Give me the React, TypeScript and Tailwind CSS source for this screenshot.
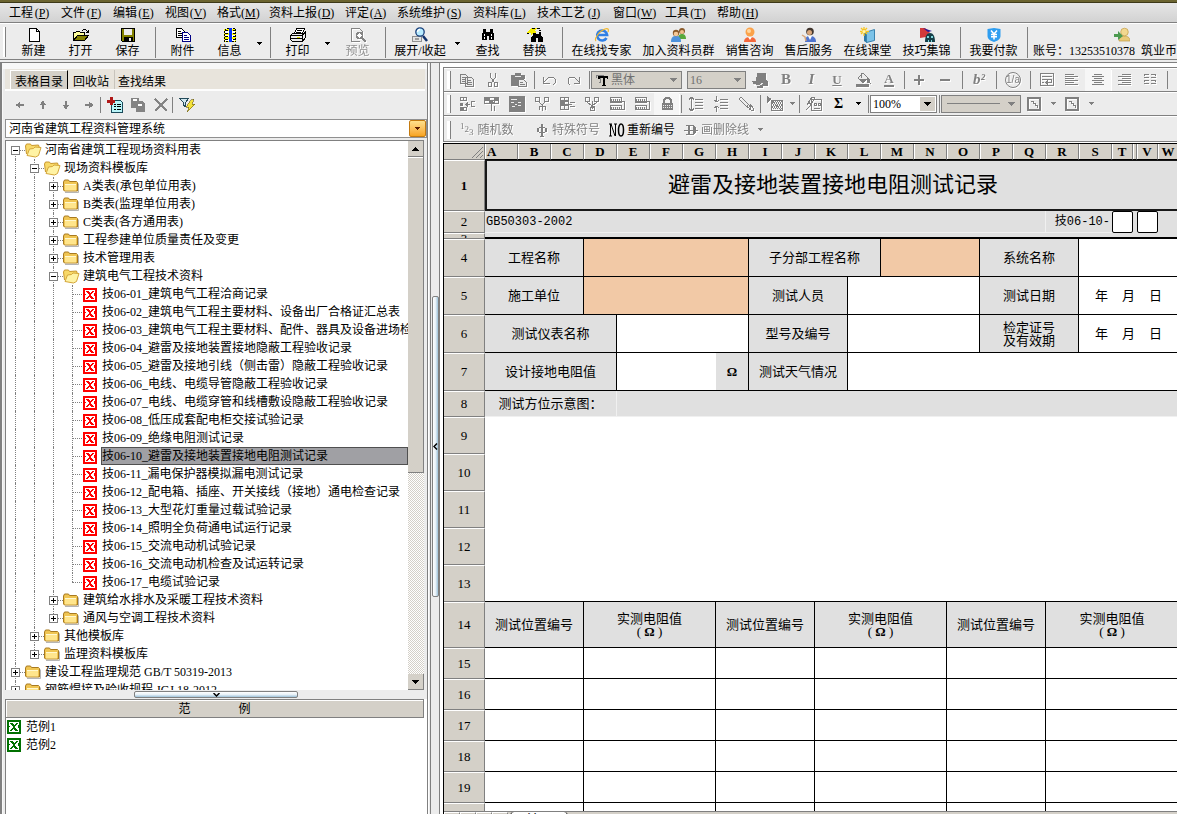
import React from "react";
import type { ReactNode } from "react";

type Kids = { children?: ReactNode };

/* ---------- icon helpers ---------- */

function Ico({ children, size = 16 }: Kids & { size?: number }) {
  return (
    <svg width={size} height={size} viewBox="0 0 16 16" fill="none" stroke="currentColor" shapeRendering="crispEdges" aria-hidden="true" className="shrink-0">
      {children}
    </svg>
  );
}

function Smooth({ children }: Kids) {
  return (
    <svg width="16" height="16" viewBox="0 0 16 16" fill="none" aria-hidden="true" className="shrink-0">
      {children}
    </svg>
  );
}

function Down() {
  return (
    <svg width="7" height="4" viewBox="0 0 7 4" fill="currentColor" shapeRendering="crispEdges" aria-hidden="true">
      <path d="M0 0h7v1H6v1H5v1H4v1H3V3H2V2H1V1H0z" />
    </svg>
  );
}

function SmallDown() {
  return (
    <svg width="5" height="3" viewBox="0 0 5 3" fill="currentColor" shapeRendering="crispEdges" aria-hidden="true">
      <path d="M0 0h5v1H4v1H3v1H2V2H1V1H0z" />
    </svg>
  );
}

const icons: Record<string, ReactNode> = {
  new: (
    <Ico>
      <path d="M3.500 1.500h7l3 3v10h-10z" fill="#fff" stroke="#000" />
      <path d="M10.500 1.500v3h3" stroke="#000" />
    </Ico>
  ),
  open: (
    <Ico>
      <path d="M0.500 13.500v-8h2l1-1h3l1 1h4v3" fill="#ffff9c" stroke="#000" />
      <path d="M0.500 13.500l4-5h11l-4 5z" fill="#848200" stroke="#000" />
      <path d="M9 3.500h1m0-1h3m0 1h1m0 1h2m-3 1h3m-1-3v3" stroke="#000" />
    </Ico>
  ),
  save: (
    <Ico>
      <path d="M1.500 1.500h13v13h-12l-1-1z" fill="#848200" stroke="#000" />
      <rect x="4" y="2" width="8" height="6" fill="#ececec" stroke="none" />
      <rect x="4" y="10" width="9" height="5" fill="#000" stroke="none" />
      <rect x="9" y="11" width="2" height="3" fill="#ececec" stroke="none" />
    </Ico>
  ),
  attach: (
    <Ico>
      <path d="M1.500 1.500h5l3 3v6h-8z" fill="#fff" stroke="#000" />
      <path d="M3 4.500h3m-3 2h4m-4 2h4" stroke="#000" />
      <path d="M7.500 5.500h5l3 3v6h-8z" fill="#fff" stroke="#000084" />
      <path d="M9 8.500h3m-3 2h5m-5 2h5" stroke="#000084" />
    </Ico>
  ),
  info: (
    <Ico>
      <rect x="2" y="2" width="12" height="13" fill="#ffff00" stroke="none" />
      <path d="M3 4.500h10m-10 4h10m-10 4h10" stroke="#fff" strokeWidth="2" />
      <path d="M3 3.500h10m-10 3h10m-10 3h10m-10 3h10" stroke="#000" strokeDasharray="3 1" />
      <path d="M2.500 14.500v-12h1v-1h9v1h1v12z" stroke="#000" strokeDasharray="2 1" />
      <rect x="7" y="1" width="3" height="14" fill="#0030ff" stroke="none" />
    </Ico>
  ),
  print: (
    <Ico>
      <path d="M4.500 6.500l2-5h8l-2 5z" fill="#fff" stroke="#000" />
      <path d="M7 3.500h5m-6 2h5" stroke="#000" />
      <path d="M0.500 8.500l2-2h11l2-2v6l-3 4h-10l-2-2z" fill="#ececec" stroke="#000" />
      <path d="M1 8.500h11v5m0-5l3-3m-14 6h11" stroke="#000" />
      <rect x="7" y="10" width="3" height="1" fill="#dede00" stroke="none" />
    </Ico>
  ),
  preview: (
    <Ico>
      <path d="M1.500 14.500v-13h8l3 3v1m-11 9h8" stroke="#848484" />
      <circle cx="9.500" cy="8.500" r="3" fill="#fff" stroke="#848484" strokeWidth="1.500" />
      <path d="M12 11l4 4" stroke="#848484" strokeWidth="2" />
    </Ico>
  ),
  expand: (
    <Smooth>
      <rect x="0.500" y="9.500" width="9" height="5" fill="#e4e4e4" stroke="#909090" />
      <path d="M3 12h4" stroke="#555" />
      <path d="M11 9l4 5" stroke="#10316b" strokeWidth="2.500" />
      <circle cx="8" cy="5" r="4.200" fill="#b9ecff" stroke="#19407c" strokeWidth="1.300" />
      <path d="M5.500 5c0-1.500 1-2.500 2.500-2.500" stroke="#fff" strokeWidth="1.300" />
    </Smooth>
  ),
  find: (
    <Ico>
      <path d="M3 2h3v3h4V2h3v3l1 2v6h-5V9H7v4H2V7l1-2z" fill="#000" stroke="none" />
      <path d="M4.500 7v2m7-2v2m-7 1v2m7-2v2" stroke="#fff" />
    </Ico>
  ),
  replace: (
    <Ico>
      <path d="M6 5h3v2h3V5h2v3l2 3v4h-5v-4H9v4H4v-4l2-3z" fill="#000" stroke="none" />
      <path d="M0 6l4-5h6L7 4l4 1-5 1-2 3V6z" fill="#f6ee00" stroke="none" />
      <path d="M5 1.500h3m2 0h3M0 6.500h2M12 3.500h2" stroke="#000" />
    </Ico>
  ),
  ie: (
    <Smooth>
      <path d="M12.500 11a5 5 0 1 1 .6-3H4.500" stroke="#2f7fe6" strokeWidth="2.600" />
      <path d="M2 14C0 12 5 4 11 2c3-1 4 0 3 3" stroke="#f2b72d" strokeWidth="1.200" />
    </Smooth>
  ),
  group: (
    <Smooth>
      <path d="M7 12c0-4 2-5 4-5s4 1 4 5z" fill="#58a83c" />
      <circle cx="11" cy="4" r="3" fill="#8a5a2a" />
      <circle cx="11" cy="5" r="2" fill="#f1c08f" />
      <path d="M0 15c0-5 2-6 5-6s5 1 5 6z" fill="#4d92dc" />
      <circle cx="5" cy="6" r="3.200" fill="#8a5a2a" />
      <circle cx="5" cy="7" r="2.300" fill="#f5c998" />
    </Smooth>
  ),
  sales: (
    <Smooth>
      <path d="M2 15c0-4 3-5 6-5s6 1 6 5z" fill="#f4683c" />
      <path d="M6 10l2 3 2-3z" fill="#fff" />
      <circle cx="8" cy="5" r="4.500" fill="#fba24a" />
      <circle cx="7" cy="4" r="2" fill="#ffd79e" />
    </Smooth>
  ),
  service: (
    <Smooth>
      <path d="M4 15c0-5 2-6 5-6s6 1 6 6z" fill="#4f74ce" />
      <path d="M7 9l2 4 2-4z" fill="#fff" />
      <circle cx="9" cy="4.500" r="3.800" fill="#41362e" />
      <circle cx="8.500" cy="5.500" r="2.500" fill="#d9a77c" />
      <path d="M1 8l3 2 1 4" stroke="#d9a77c" strokeWidth="1.500" />
    </Smooth>
  ),
  course: (
    <Smooth>
      <path d="M4 4l3 1v11l-3-2z" fill="#2b78a8" />
      <path d="M6.500 5l8-2.500v11l-8 2z" fill="#7cc3e8" stroke="#3a83ae" />
      <path d="M4 0v9M0 4.500h9M1 1l6 6M7 1L1 7" stroke="#f8c520" strokeWidth="1.300" />
      <circle cx="4" cy="4.500" r="1.500" fill="#fff7b0" />
    </Smooth>
  ),
  skills: (
    <Smooth>
      <path d="M1 1h5l5 4-4 5-6 1z" fill="#d33a3a" />
      <path d="M4 1l9 3-4 1z" fill="#2b1a9a" />
      <path d="M6 15c0-6 2-9 5-9s5 3 5 9z" fill="#153f48" />
      <path d="M8 9h2v2H8zm4 0h2v2h-2zm-3 4h1v2H9zm3 0h1v2h-1z" fill="#7fd6dc" />
    </Smooth>
  ),
  pay: (
    <Smooth>
      <path d="M1.500 2L8 1l6.500 1v7c0 3-3 5-6.500 6-3.500-1-6.500-3-6.500-6z" fill="#2f9ef0" />
      <path d="M5 3.500L8 7l3-3.500M8 7v5.500M5 7.500h6M5 9.700h6" stroke="#fff" strokeWidth="1.500" />
    </Smooth>
  ),
  account: (
    <Smooth>
      <path d="M5 14c0-4 2-5 5-5s6 1 6 5z" fill="#e8ca78" stroke="#c39c44" strokeWidth="0.700" />
      <circle cx="10.500" cy="5" r="3.800" fill="#f2d890" stroke="#c39c44" strokeWidth="0.700" />
      <path d="M0 7h4V4l5 5-5 4v-3H0z" fill="#4c9a50" />
    </Smooth>
  ),
  copy: (
    <Ico>
      <path d="M1.500 2.500h5l2 2v7h-7zM6.500 5.500h6l2 2v7h-8z" fill="#ececec" />
      <path d="M3 5.500h3m-3 2h3m-3 2h3m2-1h4m-4 2h5m-5 2h5" />
    </Ico>
  ),
  cut: (
    <Ico>
      <path d="M5.500 1v4l4 6M10.500 1v4l-4 6" />
      <rect x="3.500" y="10.500" width="3" height="4" />
      <rect x="9.500" y="10.500" width="3" height="4" />
    </Ico>
  ),
  paste: (
    <Ico>
      <path d="M0 3h4V1h6v2h4v4H7v7H0z" fill="currentColor" stroke="none" />
      <path d="M4 4.500h6" stroke="#ececec" />
      <path d="M7.500 7.500h5l3 3v4h-8z" fill="#ececec" />
      <path d="M9 10.500h3m-3 2h5" />
    </Ico>
  ),
  undo: (
    <Ico>
      <path d="M2.500 5v6h6M3 10l3-3 2-2h4l2 2v4l-2 2" />
    </Ico>
  ),
  redo: (
    <Ico>
      <path d="M13.500 5v6h-6M13 10l-3-3-2-2H4L2 7v4l2 2" />
    </Ico>
  ),
  brush: (
    <Ico>
      <path d="M5 1h9v6l2 3v4h-5v2H5v-3H2l-2-4h4z" fill="currentColor" stroke="none" />
      <path d="M1 12l6 2 4-3" stroke="#ececec" />
    </Ico>
  ),
  fill: (
    <Ico>
      <path d="M3 6l5-5 5 5-5 5z" fill="#ececec" />
      <path d="M6.500 6V1M4 7h8l-4 4zM12 6c3 1 3 3 3 5l-3-1z" fill="currentColor" />
      <rect x="1" y="12" width="13" height="3" fill="currentColor" stroke="none" />
    </Ico>
  ),
  plus: (
    <Ico>
      <path d="M3 8h10M8 3v10" strokeWidth="2" />
    </Ico>
  ),
  minus: (
    <Ico>
      <path d="M3 8h10" strokeWidth="2" />
    </Ico>
  ),
  wrap: (
    <Ico>
      <path d="M1.500 1.500h13v12h-13zM3 4.500h10M3 7.500h9v3H7m2-2l-2 2 2 2M3 10.500h2" />
    </Ico>
  ),
  left: (
    <Ico>
      <path d="M1 2.500h9m-9 2h13m-13 2h9m-9 2h13m-13 2h9m-9 2h13" />
    </Ico>
  ),
  center: (
    <Ico>
      <path d="M4 2.500h8m-10 2h12m-10 2h8m-10 2h12m-10 2h8m-10 2h12" />
    </Ico>
  ),
  right: (
    <Ico>
      <path d="M6 2.500h9m-13 2h13m-9 2h9m-13 2h13m-9 2h9m-13 2h13" />
    </Ico>
  ),
  justify: (
    <Ico>
      <path d="M2 2.500h5m2 0h5m-12 3h5m2 0h5m-12 3h5m2 0h5m-12 3h5m2 0h5" />
      <path d="M2.500 2v2m11-2v2m-11 4v2m11-2v2" />
    </Ico>
  ),
  insRow: (
    <Ico>
      <path d="M1.500 1.500h6v3h-6zM1.500 11.500h6v3h-6zM4.500 1.500v3m0 7v3M6 8.500h5M9 6.500l-2 2 2 2M16 5.500h-4v5h4" />
      <path d="M1 7h3v3H1zM2 12h2v2H2z" fill="currentColor" stroke="none" />
    </Ico>
  ),
  insCol: (
    <Ico>
      <path d="M0.500 1.500h14v6h-14zM5.500 2v6M10.500 2v6M1 4.500h13M7.500 5v10m-3-7l3-3 3 3M10.500 10v5" />
      <path d="M1 2h4v2H1zM11 2h3v2h-3z" fill="currentColor" stroke="none" />
    </Ico>
  ),
  dark: (
    <Ico>
      <rect x="0" y="0" width="16" height="16" fill="currentColor" stroke="none" />
      <path d="M2 3.500h6M2 6.500h3m1 2h2m1-2h3m-9 4h3m3-1h3" stroke="#ececec" />
    </Ico>
  ),
  split: (
    <Ico>
      <path d="M1.500 1.500h4v4h-4zM10.500 1.500h4v4h-4zM5 6l3 3 3-3M8.500 8v7M5.500 14v-4h6v4" />
    </Ico>
  ),
  delCol: (
    <Ico>
      <path d="M1.500 1.500h8v3h-8zM1.500 5.500h8v3h-8zM1.500 9.500h8v4h-8zM5.500 2v12M16 6.500h-5m5 4h-5m-3-2h5" />
      <path d="M2 5h3v4H2z" fill="currentColor" stroke="none" />
    </Ico>
  ),
  merge: (
    <Ico>
      <path d="M1.500 1.500h4v4h-4zM10.500 1.500h4v4h-4zM3 6l5 4 5-4M8.500 5v8m-2-3h4M6.500 11.500h4v3h-4z" />
    </Ico>
  ),
  rowsA: (
    <Ico>
      <path d="M1.500 1.500h11v5h-11zM1.500 9.500h11v4h-11zM12 5.500h3v8h-3" />
      <path d="M2 3.500h10m-10 8h10" strokeDasharray="1 1" strokeWidth="2" />
      <path d="M1 5h12v2H1z" fill="currentColor" stroke="none" />
    </Ico>
  ),
  lock: (
    <Ico>
      <path d="M5 8V4l2-2h3l2 2v4" strokeWidth="2" />
      <path d="M3 7h11v7H3z" fill="currentColor" stroke="none" />
      <path d="M4 9.500h9m-9 2h9" stroke="#ececec" strokeDasharray="1 1" />
    </Ico>
  ),
  spaceUp: (
    <Ico>
      <path d="M3.500 1v14M1 3.500l2-2h1l2 2M1 12.500l2 2h1l2-2M7 3.500h8m-8 3h8m-8 3h8m-8 3h8" />
    </Ico>
  ),
  spaceDown: (
    <Ico>
      <path d="M3.500 0v6M3.500 10v6M1 4l3 2 2-2M1 12l3-2 2 2M7 3.500h8m-8 3h8m-8 3h8m-8 3h8" />
    </Ico>
  ),
  clip: (
    <Ico>
      <path d="M1 3l2-2 9 9-2 2zM5 3l8 8M9 9l3 5M12 8l3 4v2h-2z" />
    </Ico>
  ),
  picture: (
    <Ico>
      <path d="M0 0l5 3-5 4z" fill="currentColor" stroke="none" />
      <path d="M4.500 4.500h11v10h-11zM5 5l10 10" />
      <path d="M5 6.500h10M6 8.500h9M5 10.500h10M6 12.500h9" strokeDasharray="1 1" />
      <path d="M6 5.500h9M5 7.500h10M6 9.500h9M5 11.500h10" strokeDasharray="1 1" />
    </Ico>
  ),
  form: (
    <Ico>
      <path d="M5.500 3.500h10v11h-10zM8 7.500h2v2H8zM12 7.500h2v2h-2zM8 12.500h6M1 9l5-8 3 1-5 8-4 4" />
      <path d="M2 6l4 3" strokeWidth="2" />
    </Ico>
  ),
  border: (
    <Ico>
      <rect x="2" y="2" width="12" height="12" strokeWidth="2" />
      <path d="M5 5.500h2v2h2v2h2v2" />
    </Ico>
  ),
  arrowL: (
    <Ico size={14}>
      <path d="M3 8l5-4v3h5v2H8v3z" fill="currentColor" stroke="none" />
    </Ico>
  ),
  arrowU: (
    <Ico size={14}>
      <path d="M8 3l4 5H9v5H7V8H4z" fill="currentColor" stroke="none" />
    </Ico>
  ),
  arrowD: (
    <Ico size={14}>
      <path d="M8 13l4-5H9V3H7v5H4z" fill="currentColor" stroke="none" />
    </Ico>
  ),
  arrowR: (
    <Ico size={14}>
      <path d="M13 8L8 4v3H3v2h5v3z" fill="currentColor" stroke="none" />
    </Ico>
  ),
  addDoc: (
    <Ico>
      <path d="M4.500 3.500h9l2 2v10h-11z" fill="#b9f4f8" stroke="#1a4a5a" />
      <path d="M7 7.500h2m1 0h4M7 9.500h2m1 0h4M7 12.500h2m1 0h4" stroke="#000" />
      <path d="M0 4.500h8M4.500 0v8" stroke="#b01818" strokeWidth="3" />
    </Ico>
  ),
  copyDark: (
    <Ico>
      <path d="M1 1h8v3h3l3 3v8H6v-4H1z" fill="#848484" stroke="none" />
      <path d="M3 3h4M8 8h4" stroke="#fff" strokeWidth="2" />
    </Ico>
  ),
  remove: (
    <Ico>
      <path d="M2 2l12 12M14 2L2 14" stroke="#848484" strokeWidth="2" />
    </Ico>
  ),
  filter: (
    <Ico>
      <path d="M0.500 1.500h9l-3 4v4l-2-1V5.500z" fill="#cfe6ee" stroke="#234a5a" />
      <path d="M12 3l3-1-2 5h3l-8 8 2-5H7z" fill="#f4e23a" stroke="#6a5c10" strokeWidth="0.600" />
    </Ico>
  ),
};

/* ---------- menu and main toolbar ---------- */

const menus: [string, string, string][] = [
  ["工程", "P", "w-[52px]"],
  ["文件", "F", "w-[52px]"],
  ["编辑", "E", "w-[52px]"],
  ["视图", "V", "w-[52px]"],
  ["格式", "M", "w-[52px]"],
  ["资料上报", "D", "w-[76px]"],
  ["评定", "A", "w-[52px]"],
  ["系统维护", "S", "w-[76px]"],
  ["资料库", "L", "w-[64px]"],
  ["技术工艺", "J", "w-[76px]"],
  ["窗口", "W", "w-[52px]"],
  ["工具", "T", "w-[52px]"],
  ["帮助", "H", "w-[52px]"],
];

function MenuBar() {
  return (
    <nav className="flex h-5 shrink-0 items-center border-b border-[#808080] bg-linear-to-b from-[#e6e6e6] to-[#d2d2d2] pl-[9px] leading-4">
      {menus.map(([name, key, width]) => (
        <button key={name} type="button" className={"flex shrink-0 whitespace-nowrap " + width}>
          {name}
          <span className="w-[18px] text-center">
            (<u>{key}</u>)
          </span>
        </button>
      ))}
    </nav>
  );
}

function BigButton({ icon, label, width, off }: { icon: string; label: string; width: string; off?: boolean }) {
  return (
    <button
      type="button"
      disabled={off}
      className={"flex shrink-0 flex-col items-center whitespace-nowrap leading-4 " + width + (off ? " text-[#909090] drop-shadow-[1px_1px_0_#fff]" : "")}
    >
      {icons[icon]}
      <span>{label}</span>
    </button>
  );
}

function BigSep() {
  return (
    <div className="flex w-2 shrink-0 justify-center">
      <div className="h-[31px] w-px bg-[#808080]" />
    </div>
  );
}

function BigDrop({ label }: { label: string }) {
  return (
    <button type="button" aria-label={label} className="flex w-[13px] shrink-0 items-center justify-center">
      <SmallDown />
    </button>
  );
}

function MainToolbar() {
  return (
    <div className="flex h-[37px] shrink-0 items-start overflow-hidden border-b border-[#808080] pt-1 shadow-[inset_0_1px_0_#fff]">
      <div className="ml-[3px] mr-1 h-[30px] w-[3px] shrink-0 border-r border-[#808080] bg-white" />
      <BigButton icon="new" label="新建" width="w-[47px]" />
      <BigButton icon="open" label="打开" width="w-[47px]" />
      <BigButton icon="save" label="保存" width="w-[47px]" />
      <BigSep />
      <BigButton icon="attach" label="附件" width="w-[47px]" />
      <BigButton icon="info" label="信息" width="w-[47px]" />
      <div className="flex h-8"><BigDrop label="信息选项" /></div>
      <BigSep />
      <BigButton icon="print" label="打印" width="w-[47px]" />
      <div className="flex h-8"><BigDrop label="打印选项" /></div>
      <BigButton icon="preview" label="预览" width="w-[47px]" off />
      <BigSep />
      <BigButton icon="expand" label="展开/收起" width="w-[62px]" />
      <div className="flex h-8"><BigDrop label="展开选项" /></div>
      <BigButton icon="find" label="查找" width="w-[47px]" />
      <BigButton icon="replace" label="替换" width="w-[47px]" />
      <BigSep />
      <BigButton icon="ie" label="在线找专家" width="w-[71px]" />
      <BigButton icon="group" label="加入资料员群" width="w-[83px]" />
      <BigButton icon="sales" label="销售咨询" width="w-[59px]" />
      <BigButton icon="service" label="售后服务" width="w-[59px]" />
      <BigButton icon="course" label="在线课堂" width="w-[59px]" />
      <BigButton icon="skills" label="技巧集锦" width="w-[59px]" />
      <BigSep />
      <BigButton icon="pay" label="我要付款" width="w-[59px]" />
      <BigSep />
      <button type="button" className="flex w-[180px] shrink-0 flex-col items-center pl-0.5 leading-4">
        {icons.account}
        <span className="w-full whitespace-nowrap text-left">账号：13253510378&nbsp; 筑业币</span>
      </button>
    </div>
  );
}

/* ---------- left pane ---------- */

type Node = { d: 0 | 1 | 2 | 3; t: string; open?: boolean; last?: boolean };

const leaves = [
  "技06-01_建筑电气工程洽商记录",
  "技06-02_建筑电气工程主要材料、设备出厂合格证汇总表",
  "技06-03_建筑电气工程主要材料、配件、器具及设备进场检验记录",
  "技06-04_避雷及接地装置接地隐蔽工程验收记录",
  "技06-05_避雷及接地引线（侧击雷）隐蔽工程验收记录",
  "技06-06_电线、电缆导管隐蔽工程验收记录",
  "技06-07_电线、电缆穿管和线槽敷设隐蔽工程验收记录",
  "技06-08_低压成套配电柜交接试验记录",
  "技06-09_绝缘电阻测试记录",
  "技06-10_避雷及接地装置接地电阻测试记录",
  "技06-11_漏电保护器模拟漏电测试记录",
  "技06-12_配电箱、插座、开关接线（接地）通电检查记录",
  "技06-13_大型花灯重量过载试验记录",
  "技06-14_照明全负荷通电试运行记录",
  "技06-15_交流电动机试验记录",
  "技06-16_交流电动机检查及试运转记录",
  "技06-17_电缆试验记录",
];

const tree: Node[] = [
  { d: 0, t: "河南省建筑工程现场资料用表", open: true },
  { d: 1, t: "现场资料模板库", open: true },
  { d: 2, t: "A类表(承包单位用表)" },
  { d: 2, t: "B类表(监理单位用表)" },
  { d: 2, t: "C类表(各方通用表)" },
  { d: 2, t: "工程参建单位质量责任及变更" },
  { d: 2, t: "技术管理用表" },
  { d: 2, t: "建筑电气工程技术资料", open: true },
  ...leaves.map((t, i): Node => ({ d: 3, t, last: i === leaves.length - 1 })),
  { d: 2, t: "建筑给水排水及采暖工程技术资料" },
  { d: 2, t: "通风与空调工程技术资料", last: true },
  { d: 1, t: "其他模板库" },
  { d: 1, t: "监理资料模板库", last: true },
  { d: 0, t: "建设工程监理规范 GB/T 50319-2013" },
  { d: 0, t: "钢筋焊接及验收规程 JGJ 18-2012" },
];

function Folder({ open }: { open?: boolean }) {
  return (
    <svg width="17" height="16" viewBox="0 0 17 16" aria-hidden="true" className="shrink-0">
      {open ? (
        <>
          <path d="M1.500 12L.5 4l1-2h4l1 1.500 7-.5 1 3" fill="#f8d968" stroke="#c9972c" />
          <path d="M2 13.500L4.500 7l4-.5 1.500-1.500 6 .5-2.500 8-3 1.500z" fill="#fff3a4" stroke="#d4a63a" />
        </>
      ) : (
        <>
          <path d="M2 14.500h13.500v-9" fill="none" stroke="#b5b5b5" />
          <path d="M0.500 12V4l1-2h4l1 1.500h7l1 1V13h-13z" fill="#f0c552" stroke="#a87a20" />
          <path d="M2 12.500v-6h11v6z" fill="#ffe58c" />
          <path d="M2 6.500h11" stroke="#fff8cf" />
        </>
      )}
    </svg>
  );
}

function SheetMark({ tone }: { tone: string }) {
  return (
    <svg width="14" height="14" viewBox="0 0 14 14" aria-hidden="true" shapeRendering="crispEdges" className={"shrink-0 " + tone}>
      <rect width="14" height="14" fill="currentColor" />
      <rect x="2" y="2" width="10" height="10" fill="#fff" />
      <path d="M3 3h3v1h1v1h1V4h1V3h2v1h-1v1H9v1H8v2h1v1h1v1h1v1H8v-1H7V9H6v1H5v1H3v-1h1V9h1V8h1V6H5V5H4V4H3z" fill="currentColor" />
      <path d="M11 5h1v3h-1zM2 6h1v1H2z" fill="currentColor" />
    </svg>
  );
}

function TreeRow({ node, first, selected }: { node: Node; first: boolean; selected: boolean }) {
  const leaf = node.d === 3;
  const own = first ? "top-[9px] bottom-0" : node.last ? "top-0 h-[9px]" : "top-0 bottom-0";
  return (
    <li role="treeitem" aria-level={node.d + 1} aria-selected={selected} className="flex h-[18px]">
      {Array.from({ length: node.d }, (_, i) => (
        <span key={i} className="relative w-[19px] shrink-0">
          <span className="absolute inset-y-0 left-[9px] border-l border-dotted border-[#808080]" />
        </span>
      ))}
      <span className="relative w-[19px] shrink-0">
        <span className={"absolute left-[9px] border-l border-dotted border-[#808080] " + own} />
        <span className="absolute left-[9px] right-0 top-[9px] border-t border-dotted border-[#808080]" />
        {!leaf && (
          <svg width="9" height="9" viewBox="0 0 9 9" shapeRendering="crispEdges" aria-hidden="true" className="absolute left-[5px] top-[5px]">
            <rect x="0.500" y="0.500" width="8" height="8" fill="#fff" stroke="#808080" />
            <path d={node.open ? "M2 4.500h5" : "M2 4.500h5M4.500 2v5"} stroke="#000" />
          </svg>
        )}
      </span>
      <span className="flex w-[19px] shrink-0 items-center">
        {leaf ? <span className="pl-px pt-px"><SheetMark tone="text-[#ff0000]" /></span> : <Folder open={node.open} />}
      </span>
      <button
        type="button"
        className={
          "whitespace-nowrap border text-left leading-4 " +
          (selected ? "min-w-0 flex-1 border-[#505050] bg-[#a0a0a4]" : "border-transparent")
        }
      >
        {node.t}
      </button>
    </li>
  );
}

function ScrollBar() {
  return (
    <div className="flex w-4 shrink-0 flex-col bg-[repeating-conic-gradient(#d4d0c8_0_25%,#fff_0_50%)] bg-size-[2px_2px]">
      <button type="button" aria-label="向上滚动" className="flex h-4 shrink-0 items-center justify-center border-b border-r border-[#808080] bg-[#d4d0c8]">
        <span className="rotate-180"><Down /></span>
      </button>
      <div className="h-[316px] border-b border-r border-[#808080] bg-[#d4d0c8] shadow-[inset_0_1px_0_#fff]" />
      <button type="button" aria-label="向下滚动" className="mt-auto flex h-4 shrink-0 items-center justify-center border-b border-r border-[#808080] bg-[#d4d0c8]">
        <Down />
      </button>
    </div>
  );
}

function SideButton({ icon, label }: { icon: string; label: string }) {
  return (
    <button type="button" aria-label={label} className="flex w-[23px] items-center justify-center text-[#808080]">
      {icons[icon]}
    </button>
  );
}

function LeftPane() {
  return (
    <aside className="flex w-[428px] shrink-0 flex-col border-l-2 border-[#808080] bg-[#ececec]">
      <div className="flex min-h-0 flex-1 flex-col border-r border-[#808080] pl-[3px] shadow-[inset_1px_6px_0_#f8f8f8]">
        <div className="mr-0.5 mt-1.5 flex h-[22px] shrink-0 items-end border-b-2 border-[#fdfdfd] bg-[#e8e4dc] pl-[5px]">
          <button type="button" className="h-[19px] w-[58px] border-l border-r border-t border-l-white border-r-black border-t-white bg-[#d4d0c8] text-center leading-[22px]">表格目录</button>
          <button type="button" className="h-[19px] w-[46px] text-center leading-6">回收站</button>
          <button type="button" className="h-[19px] border-l border-[#c8c4bc] pl-[3px] leading-6">查找结果</button>
        </div>
        <div className="flex h-7 shrink-0 items-center pl-[3px]">
          <SideButton icon="arrowL" label="左移" />
          <SideButton icon="arrowU" label="上移" />
          <SideButton icon="arrowD" label="下移" />
          <SideButton icon="arrowR" label="右移" />
          <div className="h-4 w-px bg-[#808080]" />
          <div className="ml-0.5 flex">
            <SideButton icon="addDoc" label="新增" />
            <SideButton icon="copyDark" label="复制" />
            <SideButton icon="remove" label="删除" />
          </div>
          <div className="h-4 w-px bg-[#808080]" />
          <div className="ml-0.5">
            <SideButton icon="filter" label="筛选" />
          </div>
        </div>
        <div className="relative flex h-[19px] shrink-0 border border-[#909090] bg-white">
          <select aria-label="资料系统" className="w-full appearance-none pl-[3px] leading-4 outline-none">
            <option>河南省建筑工程资料管理系统</option>
          </select>
          <span className="pointer-events-none absolute inset-y-0 right-0 flex w-[17px] items-center justify-center rounded-xs border border-[#c47a10] bg-linear-to-b from-[#ffe08a] to-[#f7a41c] text-[#5a1a00]">
            <SmallDown />
          </span>
        </div>
        <div className="mr-[3px] mt-0.5 flex min-h-0 flex-1 border-l border-t border-[#808080] bg-white">
          <ul role="tree" aria-label="表格目录" className="min-w-0 flex-1 overflow-hidden">
            {tree.map((n, i) => (
              <TreeRow key={n.t} node={n} first={i === 0} selected={n.t.startsWith("技06-10")} />
            ))}
          </ul>
          <ScrollBar />
        </div>
        <div className="flex h-[9px] shrink-0 items-center justify-center">
          <div className="flex h-[7px] w-[164px] items-center justify-center rounded-xs border border-[#808080] bg-linear-to-b from-white via-[#e8f1f7] to-[#9fc3da]">
            <svg width="7" height="4" viewBox="0 0 7 4" aria-hidden="true">
              <path d="M0.500 0L3.500 3 6.500 0" fill="none" stroke="#000" strokeWidth="1.500" />
            </svg>
          </div>
        </div>
        <section className="h-[115px] shrink-0 border-l border-[#808080] bg-white">
          <h2 className="mr-[3px] flex h-[19px] items-center justify-center gap-12 border border-l-0 border-[#808080] bg-[#d4d0c8] leading-4 shadow-[inset_1px_1px_0_#fff]">
            <span>范</span>
            <span>例</span>
          </h2>
          <ul className="pl-px">
            {["范例1", "范例2"].map((t) => (
              <li key={t} className="h-[18px]">
                <button type="button" className="flex items-center gap-[5px] leading-[18px]">
                  <SheetMark tone="text-[#007000]" />
                  {t}
                </button>
              </li>
            ))}
          </ul>
        </section>
      </div>
    </aside>
  );
}

function Splitter() {
  return (
    <div className="flex w-3 shrink-0 items-center border-l border-white bg-[#ececec]">
      <div className="ml-px flex h-full w-[10px] items-center justify-center border-x border-[#808080]">
        <div className="mt-4 flex h-[301px] w-[7px] items-center justify-center rounded-xs border border-[#808080] bg-linear-to-r from-white via-[#e8f1f7] to-[#9fc3da]">
          <svg width="5" height="7" viewBox="0 0 5 7" aria-hidden="true" className="shrink-0">
            <path d="M4 0.500L1 3.500 4 6.500" fill="none" stroke="#000" strokeWidth="1.500" />
          </svg>
        </div>
      </div>
    </div>
  );
}

/* ---------- format toolbars ---------- */

function Tool({ icon, label, children, wide, on }: Kids & { icon?: string; label: string; wide?: boolean; on?: boolean }) {
  return (
    <button
      type="button"
      aria-label={label}
      className={
        "flex h-[22px] shrink-0 items-center justify-center text-[#808080] drop-shadow-[1px_1px_0_#fff] " +
        (wide ? "w-[26px]" : "w-[25px]") +
        (on ? " bg-[#f6f6f6]" : "")
      }
    >
      {icon ? icons[icon] : children}
    </button>
  );
}

function Sep({ wide }: { wide?: boolean }) {
  return (
    <div className={"flex shrink-0 justify-center " + (wide ? "w-2" : "w-1")}>
      <div className="h-[18px] w-px bg-[#808080]" />
    </div>
  );
}

function Grip() {
  return <div className="mx-[3px] h-[18px] w-1 shrink-0 border-r border-[#808080] bg-white" />;
}

function Arrow({ label, width, dark }: { label: string; width: string; dark?: boolean }) {
  return (
    <button type="button" aria-label={label} className={"flex h-full shrink-0 items-center justify-center " + width + (dark ? " text-black" : " text-[#808080]")}>
      <SmallDown />
    </button>
  );
}

function FormatBars() {
  return (
    <div className="shrink-0 border-l border-t border-[#808080] bg-[#ececec]">
      <div className="flex h-6 items-center overflow-hidden border-b border-[#808080] shadow-[inset_0_1px_0_#fff]">
        <Grip />
        <Tool wide icon="copy" label="复制" />
        <Tool wide icon="cut" label="剪切" />
        <Tool wide icon="paste" label="粘贴" />
        <Sep />
        <Tool icon="undo" label="撤销" />
        <Tool wide icon="redo" label="重做" />
        <Sep />
        <div className="relative h-[18px] w-[91px] shrink-0 border border-[#808080] bg-[#d4d0c8]">
          <svg width="12" height="12" viewBox="0 0 12 12" fill="none" shapeRendering="crispEdges" aria-hidden="true" className="pointer-events-none absolute left-1 top-0.5">
            <path d="M0 1.500h8M0.500 1v3M4 1v7M3 8.500h2" stroke="#808080" strokeWidth="1" />
            <path d="M3 5V3h9v2M8 3v9M6 11.500h4" stroke="#000" strokeWidth="2" />
          </svg>
          <select aria-label="字体" disabled className="h-full w-full appearance-none pl-[19px] leading-4 text-[#707070] opacity-100">
            <option>黑体</option>
          </select>
          <span className="pointer-events-none absolute inset-y-0 right-1 flex items-center text-[#808080]"><Down /></span>
        </div>
        <div className="relative ml-[5px] h-[18px] w-[59px] shrink-0 border border-[#808080] bg-[#d4d0c8]">
          <select aria-label="字号" disabled className="h-full w-full appearance-none pl-0.5 leading-4 text-[#707070] opacity-100">
            <option>16</option>
          </select>
          <span className="pointer-events-none absolute inset-y-0 right-1 flex items-center text-[#808080]"><Down /></span>
        </div>
        <div className="ml-px flex">
          <Tool wide icon="brush" label="格式刷" />
        </div>
        <Tool wide label="加粗"><b className="text-[15px]">B</b></Tool>
        <Tool label="倾斜"><b className="text-[15px] italic">I</b></Tool>
        <Tool wide label="下划线"><b className="text-[13px] underline">U</b></Tool>
        <Tool wide icon="fill" label="填充颜色" />
        <Tool wide label="字体颜色"><b className="border-b-2 border-current text-[13px] leading-3">A</b></Tool>
        <Sep />
        <Tool wide icon="plus" label="增大" />
        <Tool wide icon="minus" label="减小" />
        <Sep wide />
        <Tool wide label="上标"><b className="text-[15px] italic">b²</b></Tool>
        <Sep wide />
        <Tool wide label="分数"><span className="flex size-4 items-center justify-center rounded-full border border-current font-['Liberation_Sans',sans-serif] text-[10px]">1/a</span></Tool>
        <Sep wide />
        <Tool icon="wrap" label="自动换行" />
        <Tool wide icon="left" label="左对齐" />
        <Tool wide icon="center" label="居中" on />
        <Tool wide icon="right" label="右对齐" />
        <Tool wide icon="justify" label="分散对齐" />
        <Sep wide />
      </div>
      <div className="flex h-6 items-center overflow-hidden border-b border-[#808080] shadow-[inset_0_1px_0_#fff]">
        <Grip />
        <Tool icon="insRow" label="插入行" />
        <Tool icon="insCol" label="插入列" />
        <Tool icon="dark" label="公式" />
        <Tool icon="split" label="拆分" />
        <Tool icon="delCol" label="删除列" />
        <Tool icon="merge" label="合并" />
        <Tool icon="rowsA" label="上方行" />
        <Tool icon="rowsA" label="下方行" />
        <Tool icon="lock" label="锁定" on />
        <Sep />
        <Tool icon="spaceUp" label="增加行距" />
        <Tool icon="spaceDown" label="减少行距" />
        <Tool icon="clip" label="附件" />
        <Sep />
        <Tool icon="picture" label="图片" />
        <Arrow label="图片选项" width="w-[10px]" />
        <Sep />
        <Tool icon="form" label="表单" />
        <button type="button" aria-label="求和" className="w-[25px] shrink-0 text-sm font-bold leading-4">Σ</button>
        <Arrow label="求和选项" width="w-[15px]" dark />
        <Sep />
        <div className="relative h-[18px] w-[67px] shrink-0 border border-[#808080] bg-white">
          <select aria-label="显示比例" className="h-full w-full appearance-none pl-0.5 leading-4 outline-none">
            <option>100%</option>
          </select>
          <span className="pointer-events-none absolute inset-y-px right-px flex w-[15px] items-center justify-center bg-[#d4d0c8]"><Down /></span>
        </div>
        <Sep />
        <div className="relative flex h-[18px] w-20 shrink-0 border border-[#808080] bg-[#d4d0c8]">
          <select aria-label="线型" disabled className="h-full w-full appearance-none" />
          <span className="pointer-events-none absolute inset-y-0 left-[5px] right-[5px] flex items-center gap-2 text-[#808080]">
            <span className="h-px flex-1 bg-[#808080]" />
            <Down />
          </span>
        </div>
        <Tool wide icon="border" label="边框" />
        <Arrow label="边框选项" width="w-3" />
        <Tool wide icon="border" label="斜线" />
        <Arrow label="斜线选项" width="w-3" />
      </div>
      <div className="flex h-[26px] items-center border-b border-[#808080] pt-0.5 text-[#808080] shadow-[inset_0_1px_0_#fff]">
        <Grip />
        <button type="button" className="ml-1.5 flex w-[76px] items-center gap-1 whitespace-nowrap leading-4 drop-shadow-[1px_1px_0_#fff]">
          <span className="flex text-[9px] leading-[9px]">
            <span className="pb-1.5">1</span>
            <span className="pt-[3px]">2</span>
            <span className="pt-1.5">3</span>
          </span>
          随机数
        </button>
        <button type="button" className="flex w-[73px] items-center gap-1 whitespace-nowrap leading-4 drop-shadow-[1px_1px_0_#fff]">
          <svg width="12" height="14" viewBox="0 0 12 14" fill="none" stroke="currentColor" shapeRendering="crispEdges" aria-hidden="true">
            <path d="M6 1v12M4 13.500h4M3 4.500h6M3 9.500h6" />
            <path d="M2 5v4M10 5v4M6 1v12" strokeWidth="2" />
          </svg>
          特殊符号
        </button>
        <button type="button" className="flex w-[75px] items-center whitespace-nowrap leading-4 text-black">
          <svg width="16" height="14" viewBox="0 0 16 14" fill="none" stroke="#000" aria-hidden="true" className="mr-0.5">
            <path d="M0 1h3M1.500 1v12M0 13h3M2 1l4 12M6.500 1v12M5 1h3" />
            <ellipse cx="12" cy="7" rx="2.500" ry="6" strokeWidth="1.500" />
          </svg>
          重新编号
        </button>
        <button type="button" className="flex w-[70px] items-center gap-[3px] whitespace-nowrap leading-4 drop-shadow-[1px_1px_0_#fff]">
          <svg width="14" height="12" viewBox="0 0 14 12" fill="none" stroke="currentColor" shapeRendering="crispEdges" aria-hidden="true">
            <path d="M2 1.500h7l2 2v5l-2 2H2M0 6.500h14" />
            <path d="M5 1v10M10 3v6" strokeWidth="2" />
          </svg>
          画删除线
        </button>
        <Arrow label="删除线选项" width="w-3" />
      </div>
    </div>
  );
}

/* ---------- sheet ---------- */

const letters = "ABCDEFGHIJKLMNOPQRSTUVW".split("");
const grey = "bg-[#e0e0e0]";
const peach = "bg-[#f2c9a6]";
const line = "border-b border-r border-black";

function RowHead({ n, bold }: { n: number; bold?: boolean }) {
  return (
    <th scope="row" className={"border-b border-r border-t border-b-[#808080] border-r-[#808080] border-t-white bg-[#d4d0c8] p-0 text-[13px] leading-4 " + (bold ? "font-bold" : "font-normal")}>
      {n}
    </th>
  );
}

function Cell({ span, tone = "", edge = line, children }: Kids & { span: number; tone?: string; edge?: string }) {
  return (
    <td colSpan={span} className={"p-0 text-center text-[13px] leading-[13px] " + tone + " " + edge}>
      {children}
    </td>
  );
}

function DateParts() {
  return (
    <span className="flex justify-center gap-[14px]">
      <span>年</span>
      <span>月</span>
      <span>日</span>
    </span>
  );
}

function Sheet() {
  return (
    <table className="w-[735px] table-fixed border-separate border-spacing-0">
      <colgroup>
        <col className="w-[41px]" />
        {letters.map((l) => (
          <col key={l} className={l < "T" ? "w-[33px]" : l === "U" ? "w-1" : "w-[21px]"} />
        ))}
      </colgroup>
      <thead>
        <tr className="h-4">
          <td className="border-b border-r border-[#808080] bg-[#d4d0c8] p-0">
            <svg width="14" height="12" viewBox="0 0 14 12" stroke="#808080" aria-hidden="true" className="ml-auto">
              <path d="M2 12L13 1M6 12l7-7M10 12l3-3" />
            </svg>
          </td>
          {letters.map((l) => (
            <th
              key={l}
              scope="col"
              className={
                "overflow-hidden border-b border-r border-b-black border-r-[#808080] bg-[#d4d0c8] p-0 text-[13px] font-bold leading-[15px] shadow-[inset_1px_0_0_#fff] " +
                (l === "A" ? "pl-0.5 text-left" : "text-center")
              }
            >
              {l === "U" ? "" : l}
            </th>
          ))}
        </tr>
      </thead>
      <tbody>
        <tr className="h-[51px]">
          <RowHead n={1} bold />
          <td colSpan={23} className="border-b-2 border-l-2 border-t border-[#181818] bg-[#e0e0e0] p-0 text-center text-[22px] leading-7">
            避雷及接地装置接地电阻测试记录
          </td>
        </tr>
        <tr className="h-[22px]">
          <RowHead n={2} />
          <td colSpan={17} className="border-b border-r border-[#f0f0f0] bg-[#e0e0e0] p-0 pl-px text-left font-['Liberation_Mono','Noto_Sans_CJK_SC',monospace] leading-4">
            GB50303-2002
          </td>
          <td colSpan={2} className="border-b border-[#f0f0f0] bg-[#e0e0e0] p-0 pr-0.5 text-right font-['Liberation_Mono','Noto_Sans_CJK_SC',monospace] leading-4">
            技06-10-
          </td>
          <td className="bg-[#e0e0e0] p-0">
            <input aria-label="编号一" className="block h-[22px] w-full rounded-xs border border-black bg-white" />
          </td>
          <td className="bg-[#e0e0e0] p-0" />
          <td className="bg-[#e0e0e0] p-0">
            <input aria-label="编号二" className="block h-[22px] w-full rounded-xs border border-black bg-white" />
          </td>
          <td className="bg-[#e0e0e0] p-0" />
        </tr>
        <tr className="h-1.5">
          <th scope="row" className="border-b border-r border-t border-b-[#808080] border-r-[#808080] border-t-white bg-[#d4d0c8] p-0 font-normal">
            <div className="h-1 overflow-hidden text-[13px] leading-[9px]">3</div>
          </th>
          <td colSpan={23} className="border-b-2 border-black bg-[#e0e0e0] p-0" />
        </tr>
        <tr className="h-[38px]">
          <RowHead n={4} />
          <Cell span={3} tone={grey}>工程名称</Cell>
          <Cell span={5} tone={peach} />
          <Cell span={4} tone={grey}>子分部工程名称</Cell>
          <Cell span={3} tone={peach} />
          <Cell span={3} tone={grey}>系统名称</Cell>
          <Cell span={5} />
        </tr>
        <tr className="h-[38px]">
          <RowHead n={5} />
          <Cell span={3} tone={grey}>施工单位</Cell>
          <Cell span={5} tone={peach} />
          <Cell span={3} tone={grey}>测试人员</Cell>
          <Cell span={4} />
          <Cell span={3} tone={grey}>测试日期</Cell>
          <Cell span={5}><DateParts /></Cell>
        </tr>
        <tr className="h-[38px]">
          <RowHead n={6} />
          <Cell span={4} tone={grey}>测试仪表名称</Cell>
          <Cell span={4} />
          <Cell span={3} tone={grey}>型号及编号</Cell>
          <Cell span={4} />
          <Cell span={3} tone={grey}>检定证号<br />及有效期</Cell>
          <Cell span={5}><DateParts /></Cell>
        </tr>
        <tr className="h-[38px]">
          <RowHead n={7} />
          <Cell span={4} tone={grey}>设计接地电阻值</Cell>
          <Cell span={3} edge="border-b border-black" />
          <Cell span={1} tone={grey}><b>Ω</b></Cell>
          <Cell span={3} tone={grey}>测试天气情况</Cell>
          <Cell span={12} />
        </tr>
        <tr className="h-[26px]">
          <RowHead n={8} />
          <Cell span={4} tone={grey} edge="border-b border-r border-[#f0f0f0]">测试方位示意图：</Cell>
          <Cell span={19} tone={grey} edge="border-b border-[#f0f0f0]" />
        </tr>
        {[9, 10, 11, 12, 13].map((n) => (
          <tr key={n} className="h-[37px]">
            <RowHead n={n} />
            <Cell span={23} edge={n === 13 ? "border-b border-black" : ""} />
          </tr>
        ))}
        <tr className="h-[46px]">
          <RowHead n={14} />
          {[3, 4, 3, 4, 3, 6].map((s, i) => (
            <Cell key={i} span={s} tone={grey}>
              {i % 2 === 0 ? "测试位置编号" : <>实测电阻值<br />( <b>Ω</b> )</>}
            </Cell>
          ))}
        </tr>
        {[15, 16, 17, 18, 19, 20].map((n) => (
          <tr key={n} className="h-[31px]">
            <RowHead n={n} />
            {[3, 4, 3, 4, 3, 6].map((s, i) => (
              <Cell key={i} span={s} />
            ))}
          </tr>
        ))}
      </tbody>
    </table>
  );
}

function SheetTabs() {
  return (
    <div className="flex h-[3px] shrink-0 overflow-hidden border-t border-[#808080] bg-[#d4d0c8]">
      {["首张", "上一张", "下一张", "末张"].map((t) => (
        <button key={t} type="button" aria-label={t} className="h-4 w-4 shrink-0 border-l border-t border-r border-[#808080] border-l-white border-t-white" />
      ))}
      <button type="button" className="ml-0.5 h-4 w-[58px] shrink-0 rounded-t-sm border-l border-r border-black bg-white text-sm leading-[13px]">首页</button>
    </div>
  );
}

export default function App() {
  return (
    <div className="flex h-screen flex-col overflow-hidden bg-[#ececec] font-['Liberation_Serif','Noto_Sans_CJK_SC',sans-serif] text-xs text-black">
      <div className="h-[3px] shrink-0 border-b border-[#3c3818] bg-[#6b6430]" />
      <MenuBar />
      <MainToolbar />
      <div className="mt-0.5 flex min-h-0 flex-1 border-t border-[#808080]">
        <LeftPane />
        <Splitter />
        <main className="flex min-w-0 flex-1 flex-col overflow-hidden bg-white pl-[3px] pt-1">
          <FormatBars />
          <div className="mt-px flex min-h-0 flex-1 flex-col border-l border-t border-black">
            <div className="min-h-0 flex-1 overflow-hidden">
              <Sheet />
            </div>
            <SheetTabs />
          </div>
        </main>
      </div>
    </div>
  );
}
